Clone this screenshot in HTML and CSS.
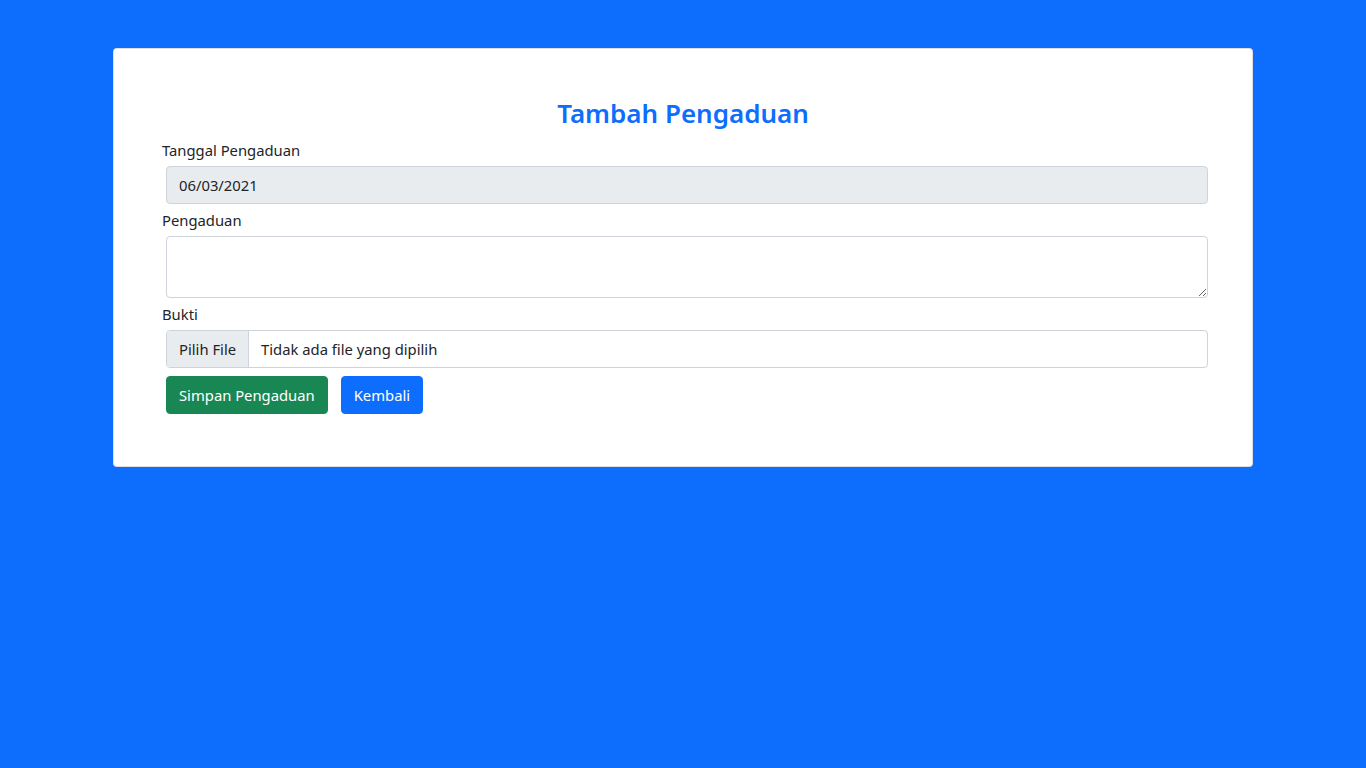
FILE: index.html
```html
<!DOCTYPE html>
<html lang="id">
<head>
<meta charset="utf-8">
<title>Tambah Pengaduan</title>
<link rel="stylesheet" href="styles.css">
</head>
<body>
<div class="container">
  <div class="card">
    <h3 class="title">Tambah Pengaduan</h3>
    <form class="form">
      <label class="label">Tanggal Pengaduan</label>
      <input class="control" type="text" value="06/03/2021" disabled>
      <label class="label">Pengaduan</label>
      <textarea class="control area" rows="2"></textarea>
      <label class="label">Bukti</label>
      <div class="control file">
        <span class="file-btn">Pilih File</span>
        <span class="file-name">Tidak ada file yang dipilih</span>
      </div>
      <div class="actions">
        <button type="button" class="btn btn-success">Simpan Pengaduan</button>
        <button type="button" class="btn btn-primary">Kembali</button>
      </div>
    </form>
  </div>
</div>
</body>
</html>
```
FILE: styles.css
```css
* { box-sizing: border-box; }
html, body { margin: 0; padding: 0; }
body {
  background: #0d6efd;
  font-family: "Noto Sans", "Open Sans", sans-serif;
  font-size: 14.8px;
  line-height: 24px;
  color: #212529;
}
.container {
  width: 1140px;
  margin: 48px auto 0;
}
.card {
  background: #fff;
  border: 1px solid rgba(0,0,0,.125);
  border-radius: 4px;
  padding: 48px;
}
.title {
  margin: 0 0 8px;
  text-align: center;
  color: #0d6efd;
  font-size: 26px;
  font-weight: 600;
  line-height: 33px;
}
.form { display: block; }
.label { display: block; }
.control {
  display: block;
  width: 100%;
  margin: 4px;
  padding: 6px 12px;
  font: inherit;
  color: #212529;
  background: #fff;
  border: 1px solid #ced4da;
  border-radius: 4px;
  height: 38px;
}
.control:disabled { background: #e9ecef; opacity: 1; }
.area { height: 62px; resize: vertical; }
.file {
  display: flex;
  padding: 0;
  overflow: hidden;
}
.file-btn {
  padding: 6px 12px;
  background: #e9ecef;
  border-right: 1px solid #ced4da;
}
.file-name { padding: 6px 12px; }
.actions { display: flex; gap: 5px; }
.btn {
  margin: 4px;
  padding: 6px 12px;
  font: inherit;
  color: #fff;
  border: 1px solid transparent;
  border-radius: 4px;
  height: 38px;
}
.btn-success { background: #198754; border-color: #198754; }
.btn-primary { background: #0d6efd; border-color: #0d6efd; }
```
